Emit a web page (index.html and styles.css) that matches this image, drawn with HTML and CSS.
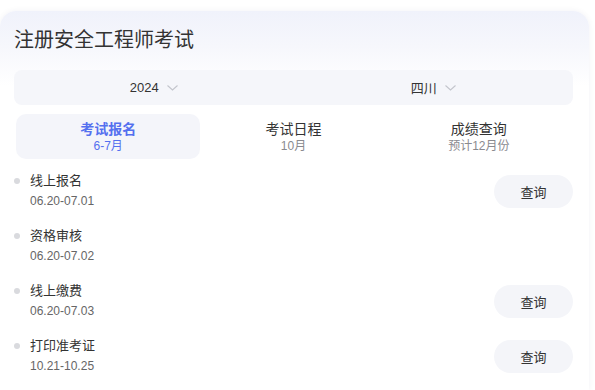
FILE: index.html
```html
<!DOCTYPE html>
<html lang="zh">
<head>
<meta charset="utf-8">
<link rel="stylesheet" href="styles.css">
</head>
<body>
<div class="card">
  <h1 class="title">注册安全工程师考试</h1>
  <div class="selector">
    <div class="sel">2024<svg class="chev" width="11" height="6" viewBox="0 0 11 6"><path d="M0.5 0.5 L5.5 5 L10.5 0.5" fill="none" stroke="#c3c5cc" stroke-width="1.1"/></svg></div>
    <div class="sel">四川<svg class="chev" width="11" height="6" viewBox="0 0 11 6"><path d="M0.5 0.5 L5.5 5 L10.5 0.5" fill="none" stroke="#c3c5cc" stroke-width="1.1"/></svg></div>
  </div>
  <div class="tabs">
    <div class="tab active"><div class="tab-label">考试报名</div><div class="tab-sub">6-7月</div></div>
    <div class="tab"><div class="tab-label">考试日程</div><div class="tab-sub">10月</div></div>
    <div class="tab"><div class="tab-label">成绩查询</div><div class="tab-sub">预计12月份</div></div>
  </div>
  <ul class="list">
    <li class="item"><div class="info"><div class="name"><span class="dot"></span>线上报名</div><div class="date">06.20-07.01</div></div><button class="btn">查询</button></li>
    <li class="item"><div class="info"><div class="name"><span class="dot"></span>资格审核</div><div class="date">06.20-07.02</div></div></li>
    <li class="item"><div class="info"><div class="name"><span class="dot"></span>线上缴费</div><div class="date">06.20-07.03</div></div><button class="btn">查询</button></li>
    <li class="item"><div class="info"><div class="name"><span class="dot"></span>打印准考证</div><div class="date">10.21-10.25</div></div><button class="btn">查询</button></li>
  </ul>
</div>
</body>
</html>
```
FILE: styles.css
```css
html, body {
  margin: 0;
  padding: 0;
  background: #ffffff;
}
body {
  font-family: "Liberation Sans", "Noto Sans CJK SC", sans-serif;
  color: #333333;
  width: 595px;
  height: 390px;
  overflow: hidden;
}
.card {
  margin-top: 11px;
  width: 589px;
  height: 379px;
  box-sizing: border-box;
  padding: 0 16px 0 14px;
  border-radius: 16px 16px 0 0;
  background: linear-gradient(180deg, #f0f2fb 0px, #f6f7fc 35px, #ffffff 75px);
  box-shadow: 0 0 6px rgba(30, 40, 90, 0.06);
}
.title {
  margin: 0;
  padding-top: 17px;
  font-size: 20px;
  line-height: 24px;
  font-weight: normal;
  color: #333333;
}
.selector {
  margin-top: 18px;
  height: 35px;
  display: grid;
  grid-template-columns: 1fr 1fr;
  background: #f5f6fa;
  border-radius: 8px;
}
.sel {
  display: flex;
  align-items: center;
  justify-content: center;
  gap: 8px;
  font-size: 13px;
  color: #333333;
}
.chev {
  display: block;
  margin-top: 1px;
}
.tabs {
  margin-top: 9px;
  display: grid;
  grid-template-columns: 1fr 1fr 1fr;
  gap: 1px;
  padding: 0 2px;
}
.tab {
  height: 45px;
  box-sizing: border-box;
  padding-top: 7px;
  text-align: center;
  border-radius: 10px;
}
.tab.active {
  background: #f4f5fa;
}
.tab-label {
  font-size: 14px;
  line-height: 17px;
  color: #333333;
}
.tab-sub {
  font-size: 12px;
  line-height: 16px;
  color: #8a8a8f;
}
.tab.active .tab-label {
  color: #5470ef;
  font-weight: bold;
}
.tab.active .tab-sub {
  color: #5470ef;
}
.list {
  list-style: none;
  margin: 12px 0 0 0;
  padding: 0;
  display: flex;
  flex-direction: column;
  gap: 15px;
}
.item {
  height: 40px;
  display: flex;
  align-items: center;
  justify-content: space-between;
}
.name {
  display: flex;
  align-items: center;
  font-size: 13px;
  line-height: 20px;
  color: #333333;
}
.dot {
  width: 6px;
  height: 6px;
  border-radius: 50%;
  background: #d9dade;
  margin-right: 10px;
}
.date {
  padding-left: 16px;
  font-size: 12px;
  line-height: 20px;
  color: #666666;
}
.btn {
  width: 79px;
  height: 33px;
  border: none;
  border-radius: 17px;
  background: #f4f5f9;
  font-family: "Liberation Sans", "Noto Sans CJK SC", sans-serif;
  font-size: 13px;
  color: #333333;
  padding: 0;
}
```
